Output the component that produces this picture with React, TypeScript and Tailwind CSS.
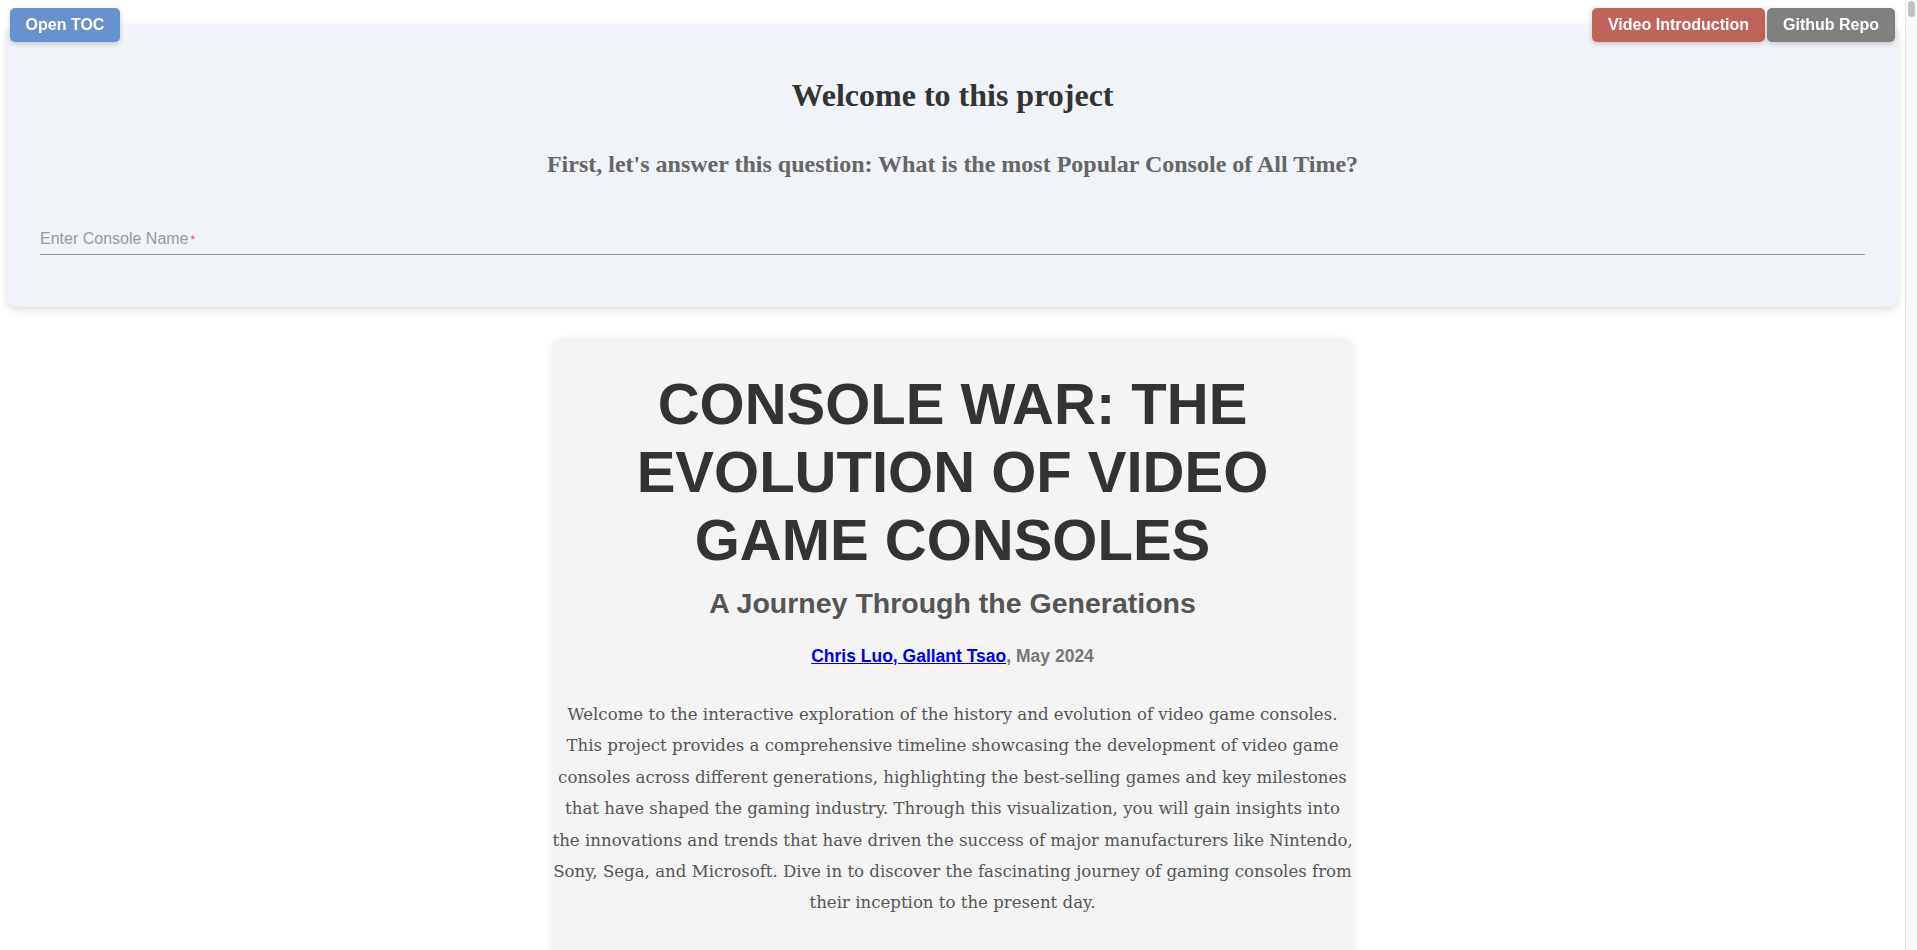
import React from 'react';

const sans = 'font-["Liberation_Sans",Arial,sans-serif]';
const times = 'font-["Liberation_Serif","Times_New_Roman",serif]';
const georgia = 'font-["DejaVu_Serif",Georgia,serif]';

const introLines = [
  'Welcome to the interactive exploration of the history and evolution of video game consoles.',
  'This project provides a comprehensive timeline showcasing the development of video game',
  'consoles across different generations, highlighting the best-selling games and key milestones',
  'that have shaped the gaming industry. Through this visualization, you will gain insights into',
  'the innovations and trends that have driven the success of major manufacturers like Nintendo,',
  'Sony, Sega, and Microsoft. Dive in to discover the fascinating journey of gaming consoles from',
  'their inception to the present day.',
];

function TopButtons() {
  return (
    <>
      {/* Left floating button */}
      <button
        className={`fixed left-[10px] top-[8px] z-20 h-[34px] w-[110px] rounded-[5px] bg-[#6792cc] text-[16px] font-bold text-white shadow-[0_2px_5px_rgba(0,0,0,0.18)] ${sans}`}
      >
        Open TOC
      </button>

      {/* Right floating buttons */}
      <div className="fixed right-[22px] top-[8px] z-20 flex gap-[2px]">
        <button
          className={`h-[34px] w-[173px] rounded-[5px] bg-[#c0645a] text-[16px] font-bold text-white shadow-[0_2px_5px_rgba(0,0,0,0.18)] ${sans}`}
        >
          Video Introduction
        </button>
        <button
          className={`h-[34px] w-[128px] rounded-[5px] bg-[#808080] text-[16px] font-bold text-white shadow-[0_2px_5px_rgba(0,0,0,0.18)] ${sans}`}
        >
          Github Repo
        </button>
      </div>
    </>
  );
}

function QuestionPanel() {
  return (
    <div className="mx-[7px] mt-[24px] rounded-[10px] bg-[#f0f3f8] px-[33px] pb-[52px] pt-[51px] shadow-[0_3px_8px_rgba(0,0,0,0.12)]">
      <h1 className={`text-center text-[32px] font-bold leading-[40px] text-[#333] ${times}`}>
        Welcome to this project
      </h1>
      <h2 className={`mt-[35px] text-center text-[24px] font-bold leading-[28px] text-[#666] ${times}`}>
        First, let's answer this question: What is the most Popular Console of All Time?
      </h2>
      <div className="mt-[48px] border-b border-[#8f9297] pb-[4px]">
        <span className={`text-[16px] leading-[20px] text-[#9a9a9a] ${sans}`}>
          Enter Console Name
        </span>
        <span className={`ml-[2px] text-[12px] text-[#e5534b] ${sans}`}>*</span>
      </div>
    </div>
  );
}

function IntroCard() {
  return (
    <div className="mx-auto mt-[31px] w-[800px] rounded-[10px] bg-[#f4f4f4] pb-[60px] pt-[32px] shadow-[0_3px_10px_rgba(0,0,0,0.1)]">
      <h1 className={`px-[40px] text-center text-[58px] font-bold uppercase leading-[68px] text-[#333] ${sans}`}>
        Console War: The Evolution of Video Game Consoles
      </h1>
      <h2 className={`mt-[12px] text-center text-[28.5px] font-bold leading-[34px] text-[#555] ${sans}`}>
        A Journey Through the Generations
      </h2>
      <p className={`mt-[26px] text-center text-[17.5px] font-bold leading-[20px] text-[#777] ${sans}`}>
        <a href="#" className="text-[#0000ee] underline">
          Chris Luo, Gallant Tsao
        </a>
        , May 2024
      </p>
      <p className={`mt-[33px] text-center text-[16.6px] leading-[31.4px] text-[#555] ${georgia}`}>
        {introLines.map((line, i) => (
          <span key={i} className="block whitespace-nowrap">
            {line}
          </span>
        ))}
      </p>
    </div>
  );
}

export default function App() {
  return (
    <div className="relative h-[950px] overflow-hidden bg-white">
      <TopButtons />
      <div className="mr-[12px]">
        <QuestionPanel />
        <IntroCard />
      </div>
      {/* scrollbar strip */}
      <div className="absolute right-0 top-0 h-full w-[12px] border-l border-[#e6e6e6] bg-[#fafafa]">
        <div className="mx-auto mt-[1px] h-[16px] w-[7px] rounded-full bg-[#c1c1c1]" />
      </div>
    </div>
  );
}
